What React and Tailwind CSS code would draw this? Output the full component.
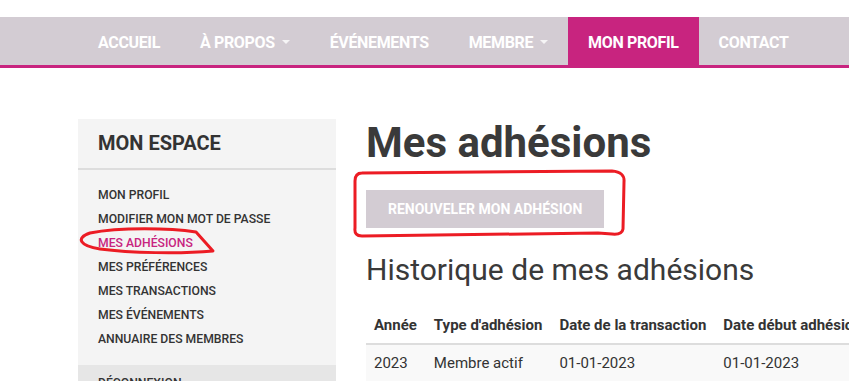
const navItems = [
  { label: 'ACCUEIL' },
  { label: 'À PROPOS', caret: true },
  { label: 'ÉVÉNEMENTS' },
  { label: 'MEMBRE', caret: true },
  { label: 'MON PROFIL', active: true },
  { label: 'CONTACT' },
]

const sideLinks = [
  'MON PROFIL',
  'MODIFIER MON MOT DE PASSE',
  'MES ADHÉSIONS',
  'MES PRÉFÉRENCES',
  'MES TRANSACTIONS',
  'MES ÉVÉNEMENTS',
  'ANNUAIRE DES MEMBRES',
]

function Caret() {
  return (
    <span className="ml-[7px] inline-block w-0 h-0 border-x-[4px] border-x-transparent border-t-[4px] border-t-white/80 translate-y-[-1px]" />
  )
}

function Annotations() {
  // hand-drawn red marks on top of the screenshot
  return (
    <svg className="absolute inset-0 pointer-events-none" width="849" height="381" viewBox="0 0 849 381" fill="none">
      <path
        d="M90 233 C120 227, 170 228, 196 232 L213 251 C180 254, 130 253, 100 249 C80 246, 75 238, 90 233"
        stroke="#ec1c24" strokeWidth="3" strokeLinecap="round" strokeLinejoin="round"
      />
      <path
        d="M362 173 L612 171 Q625 172 624 182 L623 229 Q622 235 612 234 L598 233 L362 236 Q354 236 355 228 L355 181 Q355 173 362 173"
        stroke="#ec1c24" strokeWidth="3" strokeLinecap="round" strokeLinejoin="round"
      />
    </svg>
  )
}

export default function App() {
  return (
    <div className="relative w-[849px] h-[381px] overflow-hidden bg-white font-['Roboto',sans-serif] text-[#333]">
      <div className="h-[17px]" />
      <nav className="h-[51px] bg-[#d3ccd3] border-b-[3px] border-[#c8247f] flex pl-[78px]">
        {navItems.map(item => (
          <div
            key={item.label}
            className={`h-full px-5 pt-1 flex items-center text-[16px] font-bold text-white whitespace-nowrap tracking-[-0.35px] ${item.active ? 'bg-[#c8247f]' : ''}`}
          >
            {item.label}
            {item.caret && <Caret />}
          </div>
        ))}
      </nav>

      <div className="flex pl-[78px] pt-[51px] gap-[30px]">
        <aside className="w-[258px] shrink-0 bg-[#f4f4f4]">
          <div className="px-5 pt-[13px] pb-[14px] border-b-2 border-[#dddddd]">
            <h2 className="text-[20px] font-bold text-[#333] leading-[22px]">MON ESPACE</h2>
          </div>
          <ul className="px-5 pt-[13px] pb-[14px] flex flex-col">
            {sideLinks.map(link => (
              <li
                key={link}
                className={`h-6 flex items-center text-[12.2px] font-medium ${link === 'MES ADHÉSIONS' ? 'text-[#c8247f]' : 'text-[#333]'}`}
              >
                {link}
              </li>
            ))}
          </ul>
          <div className="bg-[#e6e6e6] px-5 pt-[9px] h-12 text-[12.2px] font-medium text-[#333]">DÉCONNEXION</div>
        </aside>

        <main className="flex-1 min-w-0">
          <h1 className="text-[42px] font-bold text-[#3a3a3a] leading-[48px]">Mes adhésions</h1>
          <button className="mt-[23px] h-[38px] px-[22px] bg-[#d3ccd3] text-white text-[14px] font-bold">
            RENOUVELER MON ADHÉSION
          </button>
          <h2 className="mt-[25px] text-[30px] text-[#3a3a3a] leading-[34px]">Historique de mes adhésions</h2>
          <table className="mt-[21px] text-[15px] whitespace-nowrap border-collapse">
            <thead>
              <tr className="border-b-2 border-[#dddddd]">
                <th className="pl-2 pr-[9px] h-[36px] text-left font-bold">Année</th>
                <th className="pl-2 pr-[9px] text-left font-bold">Type d'adhésion</th>
                <th className="pl-2 pr-[9px] text-left font-bold">Date de la transaction</th>
                <th className="pl-2 pr-[9px] text-left font-bold">Date début adhésion</th>
                <th className="pl-2 pr-[9px] text-left font-bold">Date fin adhésion</th>
              </tr>
            </thead>
            <tbody>
              <tr className="bg-[#f9f9f9]">
                <td className="pl-2 pr-[9px] h-[37px]">2023</td>
                <td className="pl-2 pr-[9px]">Membre actif</td>
                <td className="pl-2 pr-[9px]">01-01-2023</td>
                <td className="pl-2 pr-[9px]">01-01-2023</td>
                <td className="pl-2 pr-[9px]">31-12-2023</td>
              </tr>
            </tbody>
          </table>
        </main>
      </div>

      <Annotations />
    </div>
  )
}
